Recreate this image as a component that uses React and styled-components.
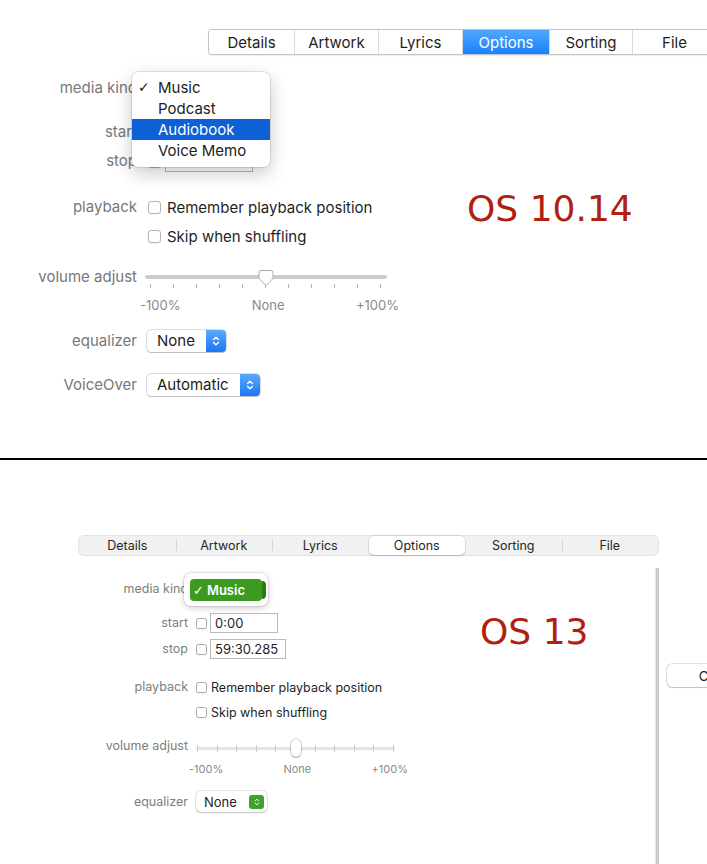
import React from "react";
import styled, { createGlobalStyle, css } from "styled-components";

const GlobalStyle = createGlobalStyle`
  html, body { margin: 0; padding: 0; background: #fff; }
  body { font-family: Inter, "Noto Sans", "Liberation Sans", sans-serif; }
  * { box-sizing: border-box; }
`;

const Page = styled.div`
  width: 707px;
  height: 864px;
  overflow: hidden;
  background: #fff;
`;

const TopSection = styled.section`
  height: 458px;
  padding-top: 29px;
  overflow: hidden;
`;

const Divider = styled.div`
  height: 2px;
  background: #000;
`;

const BottomSection = styled.section`
  height: 404px;
  padding-top: 75px;
  overflow: hidden;
`;

/* ---------- classic (10.14) ---------- */

const ClassicTabBar = styled.div`
  display: flex;
  width: max-content;
  margin-left: 208px;
  height: 26px;
  border: 1px solid #c4c4c4;
  border-right: none;
  border-radius: 4px 0 0 4px;
  overflow: hidden;
  box-shadow: 0 0.5px 1px rgba(0, 0, 0, 0.08);
`;

const ClassicTab = styled.div`
  flex: 0 0 ${(p) => p.$w}px;
  display: flex;
  align-items: center;
  justify-content: center;
  font-size: 15px;
  color: #1d1d1d;
  background: #fff;
  & + & {
    border-left: 1px solid #d9d9d9;
  }
  ${(p) =>
    p.$active &&
    css`
      background: linear-gradient(#4fa7fd, #1b82fb);
      color: #fff;
    `}
`;

const Split = styled.div`
  display: flex;
  align-items: flex-start;
  margin-top: ${(p) => p.$mt || 0}px;
`;

const Form = styled.div`
  flex: 0 0 ${(p) => p.$w}px;
  display: flex;
  flex-direction: column;
`;

const Row = styled.div`
  display: flex;
  align-items: ${(p) => (p.$top ? "flex-start" : "center")};
  gap: ${(p) => p.$gap}px;
  margin-top: ${(p) => p.$mt || 0}px;
  height: ${(p) => (p.$h ? `${p.$h}px` : "auto")};
`;

const Label = styled.div`
  flex: 0 0 ${(p) => p.$w}px;
  text-align: right;
  white-space: nowrap;
  color: ${(p) => (p.$modern ? "#7d7d7d" : "#777")};
  font-size: ${(p) => (p.$modern ? 12.5 : 15)}px;
  line-height: ${(p) => p.$lh}px;
`;

const Control = styled.div`
  position: relative;
  display: flex;
  align-items: center;
  align-self: stretch;
  gap: ${(p) => p.$gap || 0}px;
`;

const Menu = styled.div`
  position: absolute;
  left: -15px;
  top: -5px;
  width: 138px;
  padding: 5px 0 6px;
  background: #fff;
  border-radius: 6px;
  box-shadow: 0 0 0 0.5px rgba(0, 0, 0, 0.2), 0 6px 18px rgba(0, 0, 0, 0.22);
  z-index: 5;
`;

const MenuItem = styled.div`
  position: relative;
  height: 21px;
  line-height: 21px;
  padding-left: 26px;
  font-size: 15px;
  color: #222;
  ${(p) =>
    p.$hl &&
    css`
      background: #0e60d7;
      color: #fff;
    `}
`;

const MenuCheck = styled.span`
  position: absolute;
  left: 6px;
  top: 0;
  font-family: "DejaVu Sans", sans-serif;
  font-size: 14px;
`;

const CheckBox = styled.span`
  flex: 0 0 auto;
  width: ${(p) => (p.$modern ? 11 : 13)}px;
  height: ${(p) => (p.$modern ? 11 : 13)}px;
  margin-left: ${(p) => (p.$modern ? 0 : 1)}px;
  border: 1px solid ${(p) => (p.$modern ? "#a9a9a9" : "#b4b4b4")};
  border-radius: ${(p) => (p.$modern ? 2.5 : 3)}px;
  background: #fff;
  box-shadow: 0 0.5px 0.5px rgba(0, 0, 0, 0.08);
`;

const OptionText = styled.span`
  font-size: ${(p) => (p.$modern ? 12.5 : 15)}px;
  color: #1f1f1f;
  white-space: nowrap;
`;

const TextField = styled.div`
  width: ${(p) => p.$w}px;
  height: ${(p) => (p.$modern ? 20 : 21)}px;
  border: 1px solid #b9b9b9;
  background: #fff;
  padding-left: 4px;
  font-size: ${(p) => (p.$modern ? 13 : 15)}px;
  line-height: ${(p) => (p.$modern ? 18 : 19)}px;
  color: #1f1f1f;
`;

const ClassicPopup = styled.div`
  display: flex;
  width: ${(p) => p.$w}px;
  height: 22px;
  border-radius: 4px;
  background: #fff;
  overflow: hidden;
  box-shadow: 0 0 0 0.5px rgba(0, 0, 0, 0.28), 0 1px 1px rgba(0, 0, 0, 0.14);
`;

const ClassicPopupText = styled.span`
  flex: 1;
  padding-left: 10px;
  font-size: 15px;
  line-height: 22px;
  color: #1d1d1d;
`;

const BlueStepper = styled.span`
  flex: 0 0 20px;
  display: flex;
  align-items: center;
  justify-content: center;
  background: linear-gradient(#5aabfd, #1a77f4);
`;

const ClassicSlider = styled.div`
  position: relative;
  width: 242px;
  margin-left: -2px;
`;

const ClassicTrack = styled.div`
  margin-top: 9px;
  height: 4px;
  border-radius: 2px;
  background: #cdcdcd;
`;

const ClassicTicks = styled.div`
  display: flex;
  justify-content: space-between;
  padding: 0 6px 0 5px;
  margin-top: 5px;
  height: 4px;
`;

const Tick = styled.span`
  width: 1px;
  height: ${(p) => p.$h}px;
  background: ${(p) => p.$c};
`;

const Scale = styled.div`
  display: flex;
  justify-content: space-between;
  color: #8a8a8a;
  white-space: nowrap;
  ${(p) =>
    p.$modern
      ? css`
          margin: 12px -13px 0 -7px;
          font-size: 11px;
          line-height: 14px;
        `
      : css`
          margin: 9px -12px 0 -5px;
          font-size: 13px;
          line-height: 16px;
        `}
`;

const ClassicThumb = styled.svg`
  position: absolute;
  left: 50%;
  top: 3px;
  transform: translateX(-50%);
`;

const Annotation = styled.div`
  margin-top: ${(p) => p.$mt}px;
  font-family: "DejaVu Sans", Verdana, sans-serif;
  font-size: 36px;
  line-height: 36px;
  color: #b1200f;
  white-space: nowrap;
`;

/* ---------- modern (13) ---------- */

const SegBar = styled.div`
  display: flex;
  margin-left: 78px;
  width: 581px;
  height: 21px;
  background: #f1f1f1;
  border: 1px solid #e2e2e2;
  border-radius: 6px;
`;

const SegTab = styled.div`
  position: relative;
  flex: 1;
  display: flex;
  align-items: center;
  justify-content: center;
  font-size: 12.5px;
  color: #262626;
  ${(p) =>
    p.$sep &&
    css`
      &::before {
        content: "";
        position: absolute;
        left: 0;
        top: 4px;
        bottom: 4px;
        width: 1px;
        background: #d6d6d6;
      }
    `}
  ${(p) =>
    p.$active &&
    css`
      background: #fff;
      border-radius: 5px;
      box-shadow: 0 0 0 0.5px rgba(0, 0, 0, 0.16), 0 1px 1.5px rgba(0, 0, 0, 0.14);
    `}
`;

const Workspace = styled.div`
  display: flex;
  margin-top: 12px;
  height: 300px;
`;

const LeftPane = styled.div`
  flex: 0 0 655px;
  display: flex;
  align-items: flex-start;
`;

const VRule = styled.div`
  flex: 0 0 4px;
  background: #cacaca;
  border-left: 1px solid #e9e9e9;
`;

const RightPane = styled.div`
  flex: 1;
  padding: 96px 0 0 8px;
`;

const SheetButton = styled.div`
  width: 108px;
  height: 23px;
  border-radius: 5px;
  background: #fff;
  box-shadow: 0 0 0 0.5px rgba(0, 0, 0, 0.25), 0 1px 1px rgba(0, 0, 0, 0.12);
  display: flex;
  align-items: center;
  justify-content: center;
  font-size: 13.5px;
  color: #222;
`;

const Bubble = styled.div`
  position: absolute;
  left: -12px;
  top: -6px;
  display: flex;
  align-items: center;
  padding: 6px 2px 5px 6px;
  background: #fff;
  border-radius: 7px;
  box-shadow: 0 0 0 0.5px rgba(0, 0, 0, 0.14), 0 2px 6px rgba(0, 0, 0, 0.2);
  z-index: 5;
`;

const GreenPill = styled.div`
  width: 72px;
  height: 22px;
  border-radius: 4px;
  background: #3b9a1f;
  color: #fff;
  font-size: 13px;
  font-weight: 600;
  line-height: 22px;
  padding-left: 3px;
  white-space: nowrap;
`;

const PillCheck = styled.span`
  font-family: "DejaVu Sans", sans-serif;
  font-weight: 400;
  font-size: 13px;
  margin-right: 3px;
`;

const PillEdge = styled.div`
  width: 4px;
  height: 18px;
  border-radius: 0 4px 4px 0;
  background: #2c7a17;
`;

const ModernSlider = styled.div`
  position: relative;
  width: 199px;
`;

const ModernTrack = styled.div`
  margin-top: 10px;
  height: 3px;
  border-radius: 1.5px;
  background: #e4e4e4;
`;

const ModernTicks = styled.div`
  position: absolute;
  top: 8px;
  left: 0;
  right: 0;
  display: flex;
  justify-content: space-between;
  padding: 0 1px;
`;

const ModernThumb = styled.div`
  position: absolute;
  top: 2px;
  left: 50%;
  transform: translateX(-50%);
  width: 10px;
  height: 18px;
  border-radius: 5px;
  background: #fff;
  box-shadow: 0 0 0 0.5px rgba(0, 0, 0, 0.3), 0 1px 1.5px rgba(0, 0, 0, 0.2);
`;

const ModernPopup = styled.div`
  display: flex;
  align-items: center;
  width: ${(p) => p.$w}px;
  height: 21px;
  border-radius: 5px;
  background: #fff;
  padding: 0 3px 0 8px;
  box-shadow: 0 0 0 0.5px rgba(0, 0, 0, 0.2), 0 1px 1.5px rgba(0, 0, 0, 0.16);
`;

const ModernPopupText = styled.span`
  flex: 1;
  font-size: 13px;
  color: #1f1f1f;
`;

const GreenStepper = styled.span`
  flex: 0 0 15px;
  height: 14px;
  border-radius: 3px;
  background: #3fa22a;
  display: flex;
  align-items: center;
  justify-content: center;
`;

const Chevrons = ({ w = 8, h = 12, sw = 1.4 }) => (
  <svg width={w} height={h} viewBox="0 0 8 12" fill="none">
    <path d="M1.6 4.6 L4 2.2 L6.4 4.6" stroke="#fff" strokeWidth={sw} strokeLinecap="round" strokeLinejoin="round" />
    <path d="M1.6 7.4 L4 9.8 L6.4 7.4" stroke="#fff" strokeWidth={sw} strokeLinecap="round" strokeLinejoin="round" />
  </svg>
);

const classicTabs = [
  ["Details", 85],
  ["Artwork", 84],
  ["Lyrics", 84],
  ["Options", 87],
  ["Sorting", 83],
  ["File", 84],
];

const modernTabs = [
  ["Details", false],
  ["Artwork", true],
  ["Lyrics", true],
  ["Options", false],
  ["Sorting", false],
  ["File", true],
];

const ticks = Array.from({ length: 11 });

export default function App() {
  return (
    <Page>
      <GlobalStyle />
      <TopSection>
        <ClassicTabBar>
          {classicTabs.map(([t, w]) => (
            <ClassicTab key={t} $w={w} $active={t === "Options"}>
              {t}
            </ClassicTab>
          ))}
        </ClassicTabBar>
        <Split $mt={22}>
          <Form $w={467}>
            <Row $gap={10} $h={22}>
              <Label $w={137} $lh={22}>media kind</Label>
              <Control>
                <ClassicPopup $w={100}>
                  <ClassicPopupText>Music</ClassicPopupText>
                  <BlueStepper>
                    <Chevrons />
                  </BlueStepper>
                </ClassicPopup>
                <Menu>
                  <MenuItem>
                    <MenuCheck>✓</MenuCheck>Music
                  </MenuItem>
                  <MenuItem>Podcast</MenuItem>
                  <MenuItem $hl>Audiobook</MenuItem>
                  <MenuItem>Voice Memo</MenuItem>
                </Menu>
              </Control>
            </Row>
            <Row $gap={10} $h={22} $mt={22}>
              <Label $w={137} $lh={22}>start</Label>
              <Control $gap={4}>
                <CheckBox />
                <TextField $w={88}>0:00</TextField>
              </Control>
            </Row>
            <Row $gap={10} $h={22} $mt={7}>
              <Label $w={137} $lh={22}>stop</Label>
              <Control $gap={4}>
                <CheckBox />
                <TextField $w={88}>59:30.285</TextField>
              </Control>
            </Row>
            <Row $gap={10} $h={22} $mt={24}>
              <Label $w={137} $lh={22}>playback</Label>
              <Control $gap={6}>
                <CheckBox />
                <OptionText>Remember playback position</OptionText>
              </Control>
            </Row>
            <Row $gap={10} $h={22} $mt={7}>
              <Label $w={137} $lh={22} />
              <Control $gap={6}>
                <CheckBox />
                <OptionText>Skip when shuffling</OptionText>
              </Control>
            </Row>
            <Row $gap={10} $mt={19} $top>
              <Label $w={137} $lh={22}>volume adjust</Label>
              <ClassicSlider>
                <ClassicTrack />
                <ClassicTicks>
                  {ticks.map((_, i) => (
                    <Tick key={i} $h={4} $c="#b3b3b3" />
                  ))}
                </ClassicTicks>
                <Scale>
                  <span>-100%</span>
                  <span>None</span>
                  <span>+100%</span>
                </Scale>
                <ClassicThumb width="17" height="18" viewBox="0 0 17 18">
                  <path
                    d="M1.5 3.5 Q1.5 1.5 3.5 1.5 H13.5 Q15.5 1.5 15.5 3.5 V9.5 L8.5 16.5 L1.5 9.5 Z"
                    fill="#fff"
                    stroke="#a9a9a9"
                    strokeWidth="1"
                  />
                </ClassicThumb>
              </ClassicSlider>
            </Row>
            <Row $gap={10} $h={22} $mt={17}>
              <Label $w={137} $lh={22}>equalizer</Label>
              <ClassicPopup $w={79}>
                <ClassicPopupText>None</ClassicPopupText>
                <BlueStepper>
                  <Chevrons />
                </BlueStepper>
              </ClassicPopup>
            </Row>
            <Row $gap={10} $h={22} $mt={22}>
              <Label $w={137} $lh={22}>VoiceOver</Label>
              <ClassicPopup $w={113}>
                <ClassicPopupText>Automatic</ClassicPopupText>
                <BlueStepper>
                  <Chevrons />
                </BlueStepper>
              </ClassicPopup>
            </Row>
          </Form>
          <Annotation $mt={114}>OS 10.14</Annotation>
        </Split>
      </TopSection>

      <Divider />

      <BottomSection>
        <SegBar>
          {modernTabs.map(([t, sep]) => (
            <SegTab key={t} $sep={sep} $active={t === "Options"}>
              {t}
            </SegTab>
          ))}
        </SegBar>
        <Workspace>
          <LeftPane>
            <Form $w={480}>
              <Row $gap={8} $h={20} $mt={11}>
                <Label $modern $w={188} $lh={20}>media kind</Label>
                <Control>
                  <Bubble>
                    <GreenPill>
                      <PillCheck>✓</PillCheck>Music
                    </GreenPill>
                    <PillEdge />
                  </Bubble>
                </Control>
              </Row>
              <Row $gap={8} $h={20} $mt={14}>
                <Label $modern $w={188} $lh={20}>start</Label>
                <Control $gap={3}>
                  <CheckBox $modern />
                  <TextField $modern $w={68}>0:00</TextField>
                </Control>
              </Row>
              <Row $gap={8} $h={20} $mt={6}>
                <Label $modern $w={188} $lh={20}>stop</Label>
                <Control $gap={3}>
                  <CheckBox $modern />
                  <TextField $modern $w={76}>59:30.285</TextField>
                </Control>
              </Row>
              <Row $gap={8} $h={18} $mt={19}>
                <Label $modern $w={188} $lh={18}>playback</Label>
                <Control $gap={4}>
                  <CheckBox $modern />
                  <OptionText $modern>Remember playback position</OptionText>
                </Control>
              </Row>
              <Row $gap={8} $h={18} $mt={7}>
                <Label $modern $w={188} $lh={18} />
                <Control $gap={4}>
                  <CheckBox $modern />
                  <OptionText $modern>Skip when shuffling</OptionText>
                </Control>
              </Row>
              <Row $gap={8} $mt={16} $top>
                <Label $modern $w={188} $lh={18}>volume adjust</Label>
                <ModernSlider>
                  <ModernTrack />
                  <ModernTicks>
                    {ticks.map((_, i) => (
                      <Tick key={i} $h={7} $c="#cacaca" />
                    ))}
                  </ModernTicks>
                  <ModernThumb />
                  <Scale $modern>
                    <span>-100%</span>
                    <span>None</span>
                    <span>+100%</span>
                  </Scale>
                </ModernSlider>
              </Row>
              <Row $gap={8} $h={21} $mt={15}>
                <Label $modern $w={188} $lh={21}>equalizer</Label>
                <ModernPopup $w={71}>
                  <ModernPopupText>None</ModernPopupText>
                  <GreenStepper>
                    <Chevrons w={6} h={10} sw={1.3} />
                  </GreenStepper>
                </ModernPopup>
              </Row>
            </Form>
            <Annotation $mt={46}>OS 13</Annotation>
          </LeftPane>
          <VRule />
          <RightPane>
            <SheetButton>Cancel</SheetButton>
          </RightPane>
        </Workspace>
      </BottomSection>
    </Page>
  );
}
